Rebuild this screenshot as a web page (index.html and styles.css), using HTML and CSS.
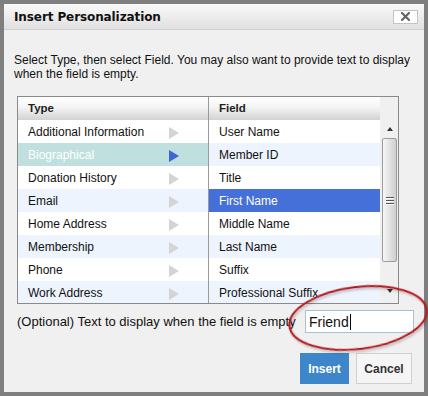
FILE: index.html
```html
<!DOCTYPE html>
<html>
<head>
<meta charset="utf-8">
<link rel="stylesheet" href="styles.css">
</head>
<body>
<div class="dialog">
  <div class="titlebar">
    <span class="title">Insert Personalization</span>
    <button class="close" aria-label="Close">
      <svg width="9" height="9" viewBox="0 0 9 9"><path d="M1 1L8 8M8 1L1 8" stroke="#666" stroke-width="2.2" stroke-linecap="square"/></svg>
    </button>
  </div>
  <div class="content">
    <p class="intro">Select Type, then select Field. You may also want to provide text to display when the field is empty.</p>
    <div class="picker">
      <div class="type-col">
        <div class="col-head">Type</div>
        <ul class="list">
          <li class="row"><span class="row-label">Additional Information</span><span class="arrow"></span></li>
          <li class="row sel-type"><span class="row-label">Biographical</span><span class="arrow"></span></li>
          <li class="row"><span class="row-label">Donation History</span><span class="arrow"></span></li>
          <li class="row"><span class="row-label">Email</span><span class="arrow"></span></li>
          <li class="row"><span class="row-label">Home Address</span><span class="arrow"></span></li>
          <li class="row"><span class="row-label">Membership</span><span class="arrow"></span></li>
          <li class="row"><span class="row-label">Phone</span><span class="arrow"></span></li>
          <li class="row"><span class="row-label">Work Address</span><span class="arrow"></span></li>
        </ul>
      </div>
      <div class="field-col">
        <div class="col-head">Field</div>
        <ul class="list">
          <li class="row">User Name</li>
          <li class="row">Member ID</li>
          <li class="row">Title</li>
          <li class="row sel-field">First Name</li>
          <li class="row">Middle Name</li>
          <li class="row">Last Name</li>
          <li class="row">Suffix</li>
          <li class="row">Professional Suffix</li>
        </ul>
      </div>
      <div class="scrollbar">
        <div class="sb-head"></div>
        <div class="sb-btn"><span class="tri-up"></span></div>
        <div class="thumb">
          <span class="grip"></span><span class="grip"></span><span class="grip"></span>
        </div>
        <div class="sb-track"></div>
        <div class="sb-btn sb-down"><span class="tri-down"></span></div>
      </div>
    </div>
    <div class="optional">
      <label class="opt-label">(Optional) Text to display when the field is empty</label>
      <div class="input">Friend<span class="caret"></span></div>
    </div>
    <div class="actions">
      <button class="btn primary">Insert</button>
      <button class="btn cancel">Cancel</button>
    </div>
  </div>
</div>
<svg class="annotation" width="428" height="396" viewBox="0 0 428 396">
  <defs>
    <filter id="sh" x="-20%" y="-20%" width="140%" height="160%">
      <feDropShadow dx="1" dy="2" stdDeviation="1.2" flood-color="#000" flood-opacity="0.25"/>
    </filter>
  </defs>
  <ellipse cx="358" cy="318" rx="69" ry="31" transform="rotate(-7 358 318)" fill="none" stroke="#b3161b" stroke-width="2" filter="url(#sh)"/>
</svg>
</body>
</html>
```

FILE: styles.css
```css
html, body {
  margin: 0;
  height: 100%;
}

body {
  background: #7f7f7f;
  padding: 4px;
  box-sizing: border-box;
  font-family: "Liberation Sans", Arial, sans-serif;
  font-size: 12px;
  color: #111;
  position: relative;
  overflow: hidden;
}

.dialog {
  width: 420px;
  height: 388px;
  background: #f0f0f0;
  display: flex;
  flex-direction: column;
}

.titlebar {
  height: 25px;
  display: flex;
  align-items: center;
  padding-left: 10px;
  background: linear-gradient(#f9f9f9, #e0e0e0);
  border-bottom: 1px solid #d0d0d0;
}

.title {
  flex: 1;
  font-family: "DejaVu Sans", sans-serif;
  font-weight: bold;
  font-size: 12px;
  color: #111;
  letter-spacing: -0.1px;
}

.close {
  width: 25px;
  height: 14px;
  margin-right: 6px;
  padding: 0;
  border: 1px solid #c4c4c4;
  background: #fff;
  box-sizing: border-box;
  display: flex;
  align-items: center;
  justify-content: center;
}

.content {
  padding: 23px 10px 0 10px;
}

.intro {
  margin: 0;
  line-height: 14px;
  width: 404px;
}

.picker {
  margin: 15px 0 0 3px;
  width: 382px;
  height: 208px;
  box-sizing: border-box;
  border: 1px solid #8a8a8a;
  display: flex;
  background: #fff;
  overflow: hidden;
}

.type-col {
  width: 190px;
  border-right: 1px solid #9a9a9a;
  flex: none;
}

.field-col {
  width: 171px;
  flex: none;
}

.col-head {
  height: 23px;
  line-height: 23px;
  padding-left: 10px;
  font-weight: bold;
  font-size: 11.5px;
  color: #222;
  background: linear-gradient(#ffffff 0%, #f4f4f4 45%, #d2d2d2 100%);
}

.list {
  list-style: none;
  margin: 0;
  padding: 0;
}

.row {
  height: 23px;
  box-sizing: border-box;
  padding: 2px 0 0 10px;
  line-height: 21px;
  display: flex;
  align-items: center;
  white-space: nowrap;
  background: #fff;
}

.row:nth-child(even) {
  background: #edf4fd;
}

.row.sel-type {
  background: #bfe0de;
  color: #fff;
}

.row.sel-field {
  background: #4570d9;
  color: #fff;
}

.row-label {
  flex: 1;
}

.arrow {
  width: 0;
  height: 0;
  border-left: 10px solid #d4d4d4;
  border-top: 6px solid transparent;
  border-bottom: 6px solid transparent;
  margin-right: 29px;
}

.sel-type .arrow {
  border-left-color: #3b66d9;
}

.scrollbar {
  width: 18px;
  flex: none;
  background: #f0f0f0;
  display: flex;
  flex-direction: column;
}

.sb-head {
  height: 23px;
}

.sb-btn {
  height: 17px;
  display: flex;
  align-items: center;
  justify-content: center;
  padding-left: 1px;
}

.sb-down {
  margin-bottom: 4px;
}

.tri-up {
  width: 0;
  height: 0;
  border-bottom: 4px solid #333;
  border-left: 3.5px solid transparent;
  border-right: 3.5px solid transparent;
}

.tri-down {
  width: 0;
  height: 0;
  border-top: 4px solid #333;
  border-left: 3.5px solid transparent;
  border-right: 3.5px solid transparent;
}

.thumb {
  height: 124px;
  margin: 1px 1px 0 2px;
  box-sizing: border-box;
  border: 1px solid #9c9c9c;
  border-radius: 2px;
  background: linear-gradient(90deg, #f6f6f6 0%, #e6e6e6 40%, #cfcfcf 100%);
  display: flex;
  flex-direction: column;
  align-items: center;
  justify-content: center;
  gap: 2px;
}

.grip {
  width: 8px;
  height: 1px;
  background: #555;
  box-shadow: 0 1px 0 #fff;
}

.sb-track {
  flex: 1;
}

.optional {
  display: flex;
  align-items: center;
  margin: 6px 0 0 3px;
  height: 23px;
}

.opt-label {
  flex: 1;
  white-space: nowrap;
  font-size: 13px;
}

.input {
  width: 109px;
  height: 23px;
  box-sizing: border-box;
  border: 1px solid #a7c0d8;
  background: #fff;
  font-size: 14px;
  padding-left: 3px;
  display: flex;
  align-items: center;
  color: #111;
}

.caret {
  width: 1px;
  height: 16px;
  background: #000;
  margin-left: 1px;
}

.actions {
  display: flex;
  justify-content: flex-end;
  gap: 7px;
  margin: 20px 2px 0 0;
}

.btn {
  height: 31px;
  padding: 0;
  font-family: inherit;
  font-weight: bold;
  font-size: 12px;
  border: 1px solid #d0d0d0;
  background: #f5f5f5;
  color: #333;
}

.primary {
  width: 49px;
  background: #3d86c9;
  border-color: #3d86c9;
  color: #fff;
}

.cancel {
  width: 56px;
}

.annotation {
  position: absolute;
  left: 0;
  top: 0;
  pointer-events: none;
}
```
